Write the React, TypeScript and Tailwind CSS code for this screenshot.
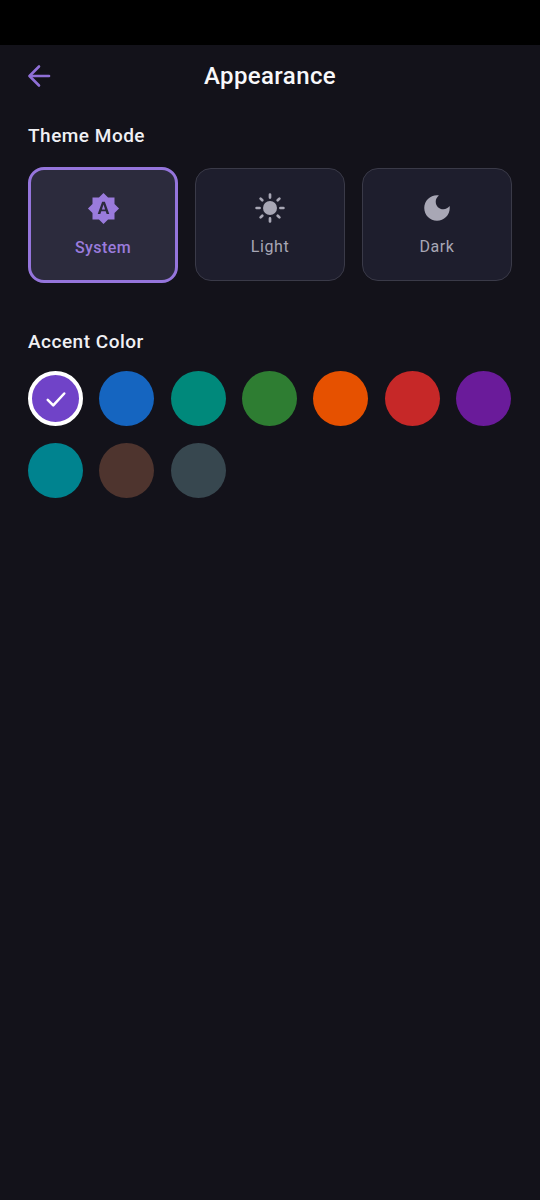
const PURPLE = "#9a7bdc";

function BackIcon() {
  return (
    <svg width="24" height="24" viewBox="0 0 24 24" fill="none" stroke="#8f6fd6" strokeWidth="2.6" strokeLinecap="round" strokeLinejoin="round">
      <path d="M12 2.5 2.5 12l9.5 9.5" />
      <path d="M3 12H22" />
    </svg>
  );
}

function AutoIcon() {
  return (
    <svg width="33" height="33" viewBox="0 0 24 24" fill={PURPLE}>
      <path d="M10.85 12.65h2.3L12 9l-1.15 3.65zM20 8.69V4h-4.69L12 .69 8.69 4H4v4.69L.69 12 4 15.31V20h4.69L12 23.31 15.31 20H20v-4.69L23.31 12 20 8.69zM14.3 16l-.7-2h-3.2l-.7 2H7.8L11 7h2l3.2 9h-1.9z" />
    </svg>
  );
}

function SunIcon() {
  return (
    <svg width="32" height="32" viewBox="0 0 32 32" fill="#a8a7b5" stroke="#a8a7b5" strokeWidth="2.7" strokeLinecap="round">
      <circle cx="16" cy="16" r="7" stroke="none" />
      <path d="M16 2.6v3M16 26.4v3M2.6 16h3M26.4 16h3M6.6 6.6l1.7 1.7M23.7 23.7l1.7 1.7M6.6 25.4l1.7-1.7M23.7 8.3l1.7-1.7" />
    </svg>
  );
}

function MoonIcon() {
  return (
    <svg width="34" height="34" viewBox="0 0 24 24" fill="#a8a7b5" className="my-[-1px]">
      <path d="M12 3c-4.97 0-9 4.03-9 9s4.03 9 9 9 9-4.03 9-9c0-.46-.04-.92-.1-1.36-.98 1.37-2.58 2.26-4.4 2.26-2.98 0-5.4-2.42-5.4-5.4 0-1.81.89-3.42 2.26-4.4-.44-.06-.9-.1-1.36-.1z" />
    </svg>
  );
}

const colors = [
  "bg-[#7043c8]",
  "bg-[#1565c0]",
  "bg-[#00897b]",
  "bg-[#2e7d32]",
  "bg-[#e65100]",
  "bg-[#c62828]",
  "bg-[#6a1b9a]",
  "bg-[#00838f]",
  "bg-[#4e342e]",
  "bg-[#37474f]",
];

export default function App() {
  return (
    <div className="min-h-[1200px] w-[540px] bg-[#13121a] font-['Roboto',sans-serif]">
      <div className="h-[45px] bg-black" />
      <div className="relative flex h-[62px] items-center justify-center">
        <div className="absolute left-[27px] top-[19px]">
          <BackIcon />
        </div>
        <h1 className="text-[24px] font-medium leading-[32px] tracking-[0.4px] text-[#f8f8fa]">Appearance</h1>
      </div>

      <div className="px-[28px]">
        <h2 className="mt-[17px] text-[19px] font-medium leading-[24px] tracking-[0.5px] text-[#f0f0f4]">Theme Mode</h2>

        <div className="mt-[19px] grid grid-cols-3 items-start gap-[17px]">
          <div className="flex h-[116px] flex-col items-center rounded-[16px] border-[3px] border-[#9575dc] bg-[#2c2b3d] pt-[22px]">
            <AutoIcon />
            <span className="mt-[11px] text-[16px] font-medium leading-[24px] tracking-[0.4px] text-[#9a7bdc]">System</span>
          </div>
          <div className="mt-[1px] flex h-[113px] flex-col items-center rounded-[16px] border border-[#3a3a48] bg-[#1e1e2d] pt-[23px]">
            <SunIcon />
            <span className="mt-[11px] text-[16px] leading-[24px] tracking-[0.6px] text-[#a8a7b5]">Light</span>
          </div>
          <div className="mt-[1px] flex h-[113px] flex-col items-center rounded-[16px] border border-[#3a3a48] bg-[#1e1e2d] pt-[23px]">
            <MoonIcon />
            <span className="mt-[11px] text-[16px] leading-[24px] tracking-[0.6px] text-[#a8a7b5]">Dark</span>
          </div>
        </div>

        <h2 className="mt-[47px] text-[19px] font-medium leading-[24px] tracking-[0.5px] text-[#f0f0f4]">Accent Color</h2>

        <div className="mr-[1px] mt-[17px] grid grid-cols-[repeat(7,55px)] justify-between gap-y-[17px]">
          {colors.map((c, i) => (
            <div
              key={c}
              className={`flex h-[55px] w-[55px] items-center justify-center rounded-full ${c} ${i === 0 ? "border-[4px] border-white" : ""}`}
            >
              {i === 0 && (
                <svg width="22" height="22" viewBox="0 0 24 24" fill="none" stroke="#ffffff" strokeWidth="2.8" strokeLinecap="round" strokeLinejoin="round">
                  <path d="M3 13l6 6L21 6" />
                </svg>
              )}
            </div>
          ))}
        </div>
      </div>
    </div>
  );
}
